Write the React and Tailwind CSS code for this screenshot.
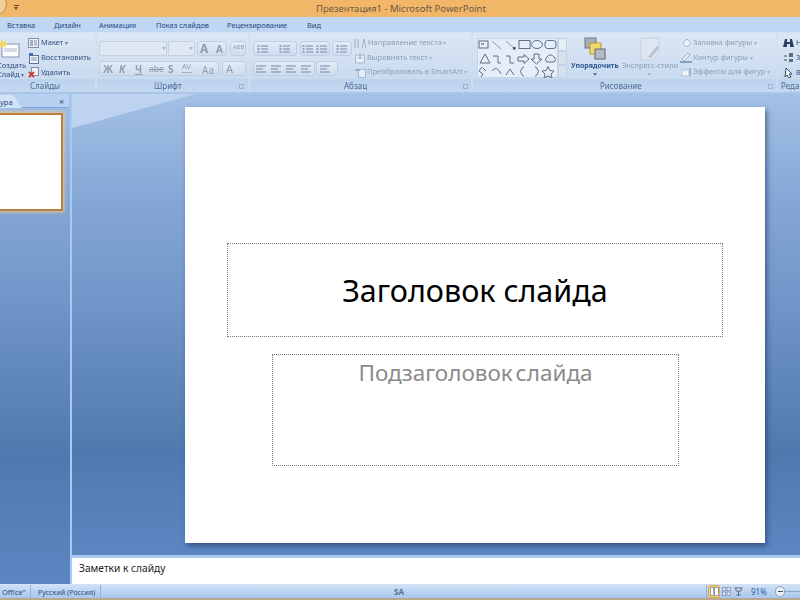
const font = "font-['Liberation_Sans',sans-serif]";

function Pill({ className = "" }) {
  return <div className={"absolute rounded-[3px] border border-[#bfcfe3] bg-[linear-gradient(#e2ebf6,#cfdced)] " + className} />;
}

function Caret() {
  return <span className="text-[6px] opacity-70"> ▾</span>;
}

function Lines({ className = "", color = "#8ea3bd", variant = "left" }) {
  const rows = [2, 5, 8];
  return (
    <svg className={"absolute " + className} width="12" height="10" viewBox="0 0 12 10">
      {rows.map((y, i) => (
        <line key={y} x1={variant === "left" ? 1 : 4} x2={variant === "left" && i === 1 ? 8 : 11} y1={y} y2={y} stroke={color} strokeWidth="1.4" />
      ))}
      {variant === "list" && rows.map((y) => <rect key={y} x="0.5" y={y - 1} width="2" height="2" fill={color} />)}
    </svg>
  );
}

function Shapes() {
  return (
    <svg className="absolute left-[477px] top-[38px]" width="80" height="40" viewBox="0 0 80 40" fill="none" stroke="#5a6f8c" strokeWidth="1">
      <rect x="2" y="3" width="9" height="7" fill="#e8f0fa" />
      <path d="M4 6h3" stroke="#33475f" />
      <line x1="15" y1="3" x2="24" y2="11" stroke="#8b9bb0" />
      <path d="M29 3 L38 11" stroke="#8b9bb0" />
      <rect x="36" y="9" width="2.500" height="2.500" fill="#33475f" stroke="none" />
      <rect x="42" y="2.500" width="11" height="8" />
      <ellipse cx="60" cy="6.500" rx="5.500" ry="4" />
      <rect x="68" y="2.500" width="11" height="8" rx="2.500" />
      <path d="M3 25 L8 16 L13 25 Z" />
      <path d="M16 18 H21 V25 H24" />
      <path d="M29 18 H33 V25 H37" />
      <path d="M41 19 H47 V16.500 L52 21 L47 25.500 V23 H41 Z" />
      <path d="M57 16 H62 V21 H65 L59.500 26 L54 21 H57 Z" />
      <path d="M70 24 a3 3 0 0 1 0 -5 a4 4 0 0 1 7 0 a3 3 0 0 1 0 5 Z" />
      <path d="M5 29 L2 33 L6 36 L4 39 M6 30 L9 33" />
      <path d="M15 33 C18 29 21 30 24 36" />
      <path d="M29 37 L33 31 L37 37" />
      <path d="M47 29 C44 29 45 33 43 33.500 C45 34 44 38 47 38" />
      <path d="M58 29 C61 29 60 33 62 33.500 C60 34 61 38 58 38" />
      <path d="M71 28.500 L72.800 32.500 L77 33 L74 36 L75 40 L71 38 L67 40 L68 36 L65 33 L69.200 32.500 Z" />
    </svg>
  );
}

function Ribbon() {
  const group = "absolute top-[1px] h-[59px] bg-[linear-gradient(#dce7f5,#c9daef_78%,#bdd2ec_79%,#c4d8f0)] ";
  return (
    <div className="absolute left-0 top-[32px] h-[60px] w-[800px] bg-[linear-gradient(#d3e1f2,#cbdcf0)]">
      <div className={group + "left-0 w-[95px]"} />
      <div className={group + "left-[97px] w-[151px]"} />
      <div className={group + "left-[250px] w-[221px]"} />
      <div className={group + "left-[473px] w-[303px]"} />
      <div className={group + "left-[778px] w-[22px]"} />
    </div>
  );
}

function RibbonContent() {
  const gray = "absolute text-[7.500px] leading-none text-[#8d9db2] whitespace-nowrap ";
  const blue = "absolute text-[7.500px] leading-none text-[#2f4f7e] whitespace-nowrap ";
  const foot = "absolute top-[82px] text-[8px] leading-none text-[#4a6c98] whitespace-nowrap ";
  return (
    <div className="absolute left-0 top-0 h-[600px] w-[800px] blur-[0.3px]">
      {/* Slides */}
      <svg className="absolute left-0 top-[36px]" width="24" height="24" viewBox="0 0 24 24">
        <rect x="2" y="8" width="17" height="13" fill="#fdfdfd" stroke="#8396ad" />
        <rect x="4" y="12" width="13" height="4" fill="#d5dbe4" />
        <path d="M2 3 l1 3 3 -2 -1 3 3 1 -3 1 1 3 -3 -2 -1 3 -1 -3 -2 1 1 -3" fill="#f7d75a" />
      </svg>
      <div className={blue + "left-[-3px] top-[62px]"}>Создать</div>
      <div className={blue + "left-[-3px] top-[71px]"}>Слайд<Caret /></div>
      <svg className="absolute left-[28px] top-[38px]" width="11" height="10" viewBox="0 0 11 10"><rect x=".5" y=".5" width="10" height="9" fill="#eef3f9" stroke="#7f91a8" /><rect x="2" y="2" width="3" height="6" fill="#9fb0c5" /><path d="M6 3h3M6 5h3M6 7h3" stroke="#7f91a8" /></svg>
      <div className={blue + "left-[41px] top-[39px]"}>Макет<Caret /></div>
      <svg className="absolute left-[28px] top-[52px]" width="11" height="12" viewBox="0 0 11 12"><rect x="1.500" y="3.500" width="9" height="8" fill="#eef3f9" stroke="#62758f" /><path d="M1 1h4v3H1z" fill="#3f6fb5" /><path d="M3 6h6M3 8h6" stroke="#7f91a8" /></svg>
      <div className={blue + "left-[41px] top-[54px]"}>Восстановить</div>
      <svg className="absolute left-[28px] top-[67px]" width="11" height="11" viewBox="0 0 11 11"><rect x="3.500" y=".5" width="7" height="8" fill="#eef3f9" stroke="#7f91a8" /><path d="M1 5l5 5M6 5l-5 5" stroke="#d0392b" strokeWidth="1.800" /></svg>
      <div className={blue + "left-[41px] top-[69px]"}>Удалить</div>
      <div className={foot + "left-[30px]"}>Слайды</div>

      {/* Font */}
      <div className="absolute left-[99px] top-[41px] h-[15px] w-[68px] rounded-l-[2px] border border-[#c1d0e2] bg-[#dfe7f2]" />
      <div className="absolute left-[168px] top-[41px] h-[15px] w-[27px] rounded-r-[2px] border border-[#c1d0e2] bg-[#dfe7f2]" />
      <div className="absolute left-[162px] top-[47px] h-0 w-0 border-x-[2px] border-t-[3px] border-x-transparent border-t-[#a9b6c6]" />
      <div className="absolute left-[189px] top-[47px] h-0 w-0 border-x-[2px] border-t-[3px] border-x-transparent border-t-[#a9b6c6]" />
      <Pill className="left-[197px] top-[41px] h-[15px] w-[30px]" />
      <div className={gray + "left-[200px] top-[43px] !text-[12px] font-bold font-['Liberation_Serif',serif]"}>A</div>
      <div className={gray + "left-[216px] top-[44px] !text-[10px] font-bold font-['Liberation_Serif',serif]"}>A</div>
      <Pill className="left-[230px] top-[41px] h-[15px] w-[16px]" />
      <div className={gray + "left-[233px] top-[44px] !text-[6px]"}>АБВ</div>
      <Pill className="left-[99px] top-[61px] h-[15px] w-[120px]" />
      <div className={gray + "left-[103px] top-[64px] !text-[10px] font-bold font-['Liberation_Serif',serif]"}>Ж</div>
      <div className={gray + "left-[119px] top-[64px] !text-[10px] font-bold italic font-['Liberation_Serif',serif]"}>К</div>
      <div className={gray + "left-[135px] top-[64px] !text-[10px] font-bold underline font-['Liberation_Serif',serif]"}>Ч</div>
      <div className={gray + "left-[149px] top-[65px] !text-[8.500px] line-through font-['Liberation_Serif',serif]"}>abe</div>
      <div className={gray + "left-[168px] top-[64px] !text-[10px] font-bold"}>S</div>
      <div className={gray + "left-[182px] top-[63px] !text-[7.500px]"}>AV</div>
      <div className="absolute left-[182px] top-[72px] h-px w-[10px] bg-[#9fb0c4]" />
      <div className={gray + "left-[202px] top-[65px] !text-[10px]"}>Aa</div>
      <Pill className="left-[222px] top-[61px] h-[15px] w-[24px]" />
      <div className={gray + "left-[226px] top-[63px] !text-[11px]"}>A</div>
      <div className={foot + "left-[154px]"}>Шрифт</div>
      <div className="absolute left-[239px] top-[84px] h-[5px] w-[5px] border border-[#9fb3cc]" />

      {/* Paragraph */}
      <Pill className="left-[253px] top-[41px] h-[15px] w-[44px]" />
      <Lines className="left-[257px] top-[44px]" variant="list" />
      <Lines className="left-[279px] top-[44px]" variant="list" />
      <Pill className="left-[300px] top-[41px] h-[15px] w-[30px]" />
      <Lines className="left-[302px] top-[44px]" variant="list" />
      <Lines className="left-[316px] top-[44px]" variant="list" />
      <Pill className="left-[332px] top-[41px] h-[15px] w-[20px]" />
      <Lines className="left-[336px] top-[44px]" variant="list" />
      <Pill className="left-[253px] top-[61px] h-[15px] w-[62px]" />
      <Lines className="left-[255px] top-[64px]" />
      <Lines className="left-[270px] top-[64px]" />
      <Lines className="left-[285px] top-[64px]" />
      <Lines className="left-[300px] top-[64px]" />
      <Pill className="left-[316px] top-[61px] h-[15px] w-[22px]" />
      <Lines className="left-[319px] top-[64px]" />
      <svg className="absolute left-[354px] top-[38px]" width="12" height="11" viewBox="0 0 12 11"><path d="M1 10V1M4 10V1M8 10L10 1L12 10" stroke="#9badc3" fill="none" /></svg>
      <div className={gray + "left-[368px] top-[39px]"}>Направление текста<Caret /></div>
      <svg className="absolute left-[355px] top-[53px]" width="10" height="11" viewBox="0 0 10 11"><rect x=".5" y="2" width="9" height="8" fill="#e6edf6" stroke="#a9b8ca" /><path d="M5 0v6M3 4l2 2 2-2" stroke="#9badc3" fill="none" /></svg>
      <div className={gray + "left-[367px] top-[54px]"}>Выровнять текст<Caret /></div>
      <svg className="absolute left-[355px] top-[67px]" width="11" height="11" viewBox="0 0 11 11"><rect x="3.500" y="2.500" width="7" height="8" fill="#e6edf6" stroke="#a9b8ca" /><path d="M0 2h5v2H0z" fill="#9badc3" /></svg>
      <div className={gray + "left-[367px] top-[68px]"}>Преобразовать в SmartArt<Caret /></div>
      <div className={foot + "left-[344px]"}>Абзац</div>
      <div className="absolute left-[463px] top-[84px] h-[5px] w-[5px] border border-[#9fb3cc]" />

      {/* Drawing */}
      <div className="absolute left-[477px] top-[38px] h-[40px] w-[81px] border border-[#c3d2e4] bg-[#e6edf6]" />
      <Shapes />
      <div className="absolute left-[558px] top-[38px] h-[13px] w-[9px] border border-[#c3d2e4] bg-[#e5edf6]" />
      <div className="absolute left-[558px] top-[51px] h-[14px] w-[9px] border border-[#c3d2e4] bg-[#d5e1ef]" />
      <div className="absolute left-[558px] top-[65px] h-[13px] w-[9px] border border-[#c3d2e4] bg-[#d5e1ef]" />
      <svg className="absolute left-[583px] top-[37px]" width="24" height="24" viewBox="0 0 24 24">
        <rect x="2" y="1" width="11" height="10" fill="#a9aeb6" stroke="#6d7683" />
        <rect x="7" y="6" width="11" height="11" fill="#f3d96b" stroke="#b99a30" />
        <rect x="12" y="12" width="10" height="10" fill="#b5bbc2" stroke="#5f6873" />
      </svg>
      <div className="absolute left-[571px] top-[62px] whitespace-nowrap text-[7px] font-bold leading-none text-[#2c5590]">Упорядочить</div>
      <div className="absolute left-[593px] top-[73px] h-0 w-0 border-x-[2px] border-t-[3px] border-x-transparent border-t-[#5a7396]" />
      <svg className="absolute left-[639px] top-[37px]" width="22" height="25" viewBox="0 0 22 25">
        <path d="M2 1h18v14l-6 8H2z" fill="#dfe6ef" stroke="#c5d0de" />
        <path d="M9 20L18 9l2 2-8 10z" fill="#b7c2d0" />
      </svg>
      <div className={gray + "left-[622px] top-[62px]"}>Экспресс-стили</div>
      <div className="absolute left-[647px] top-[73px] h-0 w-0 border-x-[2px] border-t-[3px] border-x-transparent border-t-[#a9b6c6]" />
      <svg className="absolute left-[681px] top-[38px]" width="11" height="10" viewBox="0 0 11 10"><path d="M2 5l4-4 4 4-4 4z" fill="#eef3f9" stroke="#a4b2c4" /></svg>
      <div className={gray + "left-[693px] top-[39px]"}>Заливка фигуры<Caret /></div>
      <svg className="absolute left-[680px] top-[52px]" width="12" height="11" viewBox="0 0 12 11"><path d="M2 7L8 1l2 2-6 6z" fill="#e6edf6" stroke="#a4b2c4" /><path d="M0 10h12" stroke="#6f88aa" strokeWidth="1.500" /></svg>
      <div className={gray + "left-[693px] top-[54px]"}>Контур фигуры<Caret /></div>
      <svg className="absolute left-[681px] top-[67px]" width="11" height="10" viewBox="0 0 11 10"><rect x="1" y="3" width="7" height="6" fill="#f1f5fa" stroke="#b7c3d2" /><rect x="8" y="1" width="2" height="8" fill="#a4b2c4" /></svg>
      <div className={gray + "left-[693px] top-[68px]"}>Эффекты для фигур<Caret /></div>
      <div className={foot + "left-[600px]"}>Рисование</div>
      <div className="absolute left-[768px] top-[84px] h-[5px] w-[5px] border border-[#9fb3cc]" />

      {/* Editing */}
      <svg className="absolute left-[783px] top-[38px]" width="11" height="11" viewBox="0 0 11 11"><path d="M2 1h2v3h3V1h2l2 8H7V6H4v3H0z" fill="#2b3f60" /></svg>
      <div className={blue + "left-[796px] top-[39px]"}>Н</div>
      <svg className="absolute left-[783px] top-[52px]" width="11" height="11" viewBox="0 0 11 11"><path d="M1 4h3M1 8h3" stroke="#3a6b3a" /><path d="M6 1h4v4H6zM6 7h4v3H6z" fill="#5d6e86" /></svg>
      <div className={blue + "left-[796px] top-[54px]"}>З</div>
      <svg className="absolute left-[784px] top-[67px]" width="10" height="11" viewBox="0 0 10 11"><path d="M2 1l6 6H5l2 3-2 1-2-3-2 2z" fill="#f5f8fc" stroke="#3c4f6c" /></svg>
      <div className={blue + "left-[796px] top-[69px]"}>В</div>
      <div className={foot + "left-[781px]"}>Редак</div>
    </div>
  );
}

export default function App() {
  return (
    <div className={"relative h-[600px] w-[800px] overflow-hidden bg-[#5a85bf] " + font}>
      {/* Title bar */}
      <div className="absolute left-0 top-0 h-[17px] w-[800px] bg-[#f2b669]" />
      <div className="absolute left-[-14px] top-[-6px] h-[21px] w-[21px] rounded-full border border-[#b58a55] bg-[#f4cc98]" />
      <div className="absolute left-[14px] top-[5px] h-[1px] w-[5px] bg-[#5b4a33]" />
      <div className="absolute left-[14px] top-[7px] h-0 w-0 border-x-[2.500px] border-t-[3px] border-x-transparent border-t-[#5b4a33]" />
      <div className="absolute left-[316px] top-[3px] whitespace-nowrap text-[9.500px] leading-[12px] text-[#6b5a44]">Презентация1 - Microsoft PowerPoint</div>

      {/* Tabs */}
      <div className="absolute left-0 top-[17px] h-[15px] w-[800px] bg-[#bfd7f4]" />
      <div className="absolute left-0 top-[21px] flex h-[10px] w-[340px] items-center text-[7.400px] leading-none text-[#24497f]">
        <span className="absolute left-[7px]">Вставка</span>
        <span className="absolute left-[54px]">Дизайн</span>
        <span className="absolute left-[99px]">Анимация</span>
        <span className="absolute left-[156px]">Показ слайдов</span>
        <span className="absolute left-[227px]">Рецензирование</span>
        <span className="absolute left-[307px]">Вид</span>
      </div>

      <Ribbon />
      <RibbonContent />
      <div className="absolute left-0 top-[92px] h-[2px] w-[800px] bg-[#a9c5e8]" />

      {/* Left pane */}
      <div className="absolute left-0 top-[94px] h-[490px] w-[70px] bg-[linear-gradient(#a3c0e6,#85a7d6_22%,#7196c9_42%,#4f79ae_74%,#5c86c2)]" />
      <div className="absolute left-0 top-[94px] h-[14px] w-[69px] border-b border-[#7fa5d6] bg-[#b8d1f0]" />
      <div className="absolute left-0 top-[95px] h-[13px] w-[22px] bg-[#d3e3f6] [clip-path:polygon(0_0,60%_0,100%_100%,0_100%)]" />
      <div className="absolute left-0 top-[97px] text-[7.500px] leading-[10px] text-[#23467a]">ура</div>
      <div className="absolute left-[59px] top-[97px] text-[9px] font-bold leading-[10px] text-[#4d6a90]">×</div>
      <div className="absolute left-[-3px] top-[113px] h-[98px] w-[66px] border-2 border-[#b87f44] bg-white shadow-[0_0_3px_1px_#f3c78c]" />
      <div className="absolute left-[70px] top-[94px] h-[490px] w-[2px] bg-[#a9c8f2]" />

      {/* Workspace */}
      <div className="absolute left-[72px] top-[94px] h-[461px] w-[728px] bg-[linear-gradient(#a3c0e6,#85a7d6_23%,#7196c9_45%,#4f79ae_78%,#5c86c2)]" />
      <div className="absolute left-[72px] top-[94px] h-[40px] w-[728px] bg-[#bdd3ef] [clip-path:polygon(0_0,100%_0,100%_0%,17%_0%,0_85%)]" />
      <div className="absolute left-[72px] top-[555px] h-[3px] w-[728px] bg-[#a9c8f2]" />

      {/* Slide */}
      <div className="absolute left-[185px] top-[107px] h-[436px] w-[580px] bg-white shadow-[2px_3px_5px_rgba(30,50,90,0.6)]" />
      <div className="absolute left-[227px] top-[243px] flex h-[94px] w-[496px] items-center justify-center border border-dotted border-[#777]">
        <span className="font-['Open_Sans',sans-serif] text-[30.500px] leading-none text-black">Заголовок слайда</span>
      </div>
      <div className="absolute left-[272px] top-[354px] flex h-[112px] w-[407px] justify-center border border-dotted border-[#777] pt-[4px]">
        <span className="font-['Open_Sans',sans-serif] text-[22.500px] leading-[28px] text-[#8b8b8b] [word-spacing:-3px]">Подзаголовок слайда</span>
      </div>

      {/* Notes */}
      <div className="absolute left-[72px] top-[558px] h-[26px] w-[728px] bg-white" />
      <div className="absolute left-[79px] top-[562px] whitespace-nowrap text-[10.200px] leading-[13px] text-[#222]">Заметки к слайду</div>

      {/* Status bar */}
      <div className="absolute left-0 top-[584px] h-[14px] w-[800px] bg-[linear-gradient(#d4e3f6,#bcd4f2_50%,#a9c6ec)]" />
      <div className="absolute left-0 top-[598px] h-[2px] w-[800px] bg-[#b9a98c]" />
      <div className="absolute left-[2px] top-[587px] text-[7.500px] leading-[10px] text-[#2b4f80]">Office"</div>
      <div className="absolute left-[30px] top-[585px] h-[13px] w-px bg-[#94afd2]" />
      <div className="absolute left-[38px] top-[587px] whitespace-nowrap text-[7.100px] leading-[10px] text-[#2b4f80]">Русский (Россия)</div>
      <div className="absolute left-[100px] top-[585px] h-[13px] w-px bg-[#94afd2]" />
      <div className="absolute left-[394px] top-[587px] text-[8px] font-bold leading-[10px] text-[#56708f]">SA</div>
      <div className="absolute left-[706px] top-[585px] h-[13px] w-px bg-[#94afd2]" />
      <div className="absolute left-[708px] top-[585px] h-[13px] w-[12px] rounded-[2px] border border-[#d9a94f] bg-[#f8d27c]" />
      <svg className="absolute left-[710px] top-[587px]" width="9" height="9" viewBox="0 0 9 9"><rect x=".5" y=".5" width="3" height="8" fill="#fff" stroke="#6f7f96" strokeWidth=".7" /><rect x="4.500" y=".5" width="4" height="8" fill="#fff" stroke="#6f7f96" strokeWidth=".7" /></svg>
      <svg className="absolute left-[722px] top-[587px]" width="9" height="9" viewBox="0 0 9 9" fill="#dfe8f4" stroke="#76879e" strokeWidth=".7"><rect x=".5" y=".5" width="3.300" height="3.300" /><rect x="5" y=".5" width="3.300" height="3.300" /><rect x=".5" y="5" width="3.300" height="3.300" /><rect x="5" y="5" width="3.300" height="3.300" /></svg>
      <svg className="absolute left-[734px] top-[587px]" width="9" height="9" viewBox="0 0 9 9" fill="#dfe8f4" stroke="#56677f"><path d="M.5 1h8M2 1v3h5V1M4.500 4v4M2.500 8h4" /></svg>
      <div className="absolute left-[751px] top-[587px] text-[8px] leading-[10px] text-[#2b5a9a]">91%</div>
      <div className="absolute left-[775px] top-[586px] flex h-[11px] w-[10px] items-center justify-center rounded-full border border-[#8fa3bd] bg-[#e9f0f9]">
        <div className="h-px w-[5px] bg-[#3f526d]" />
      </div>
      <div className="absolute left-[785px] top-[591px] h-px w-[15px] bg-[#8fa7c6]" />
    </div>
  );
}
